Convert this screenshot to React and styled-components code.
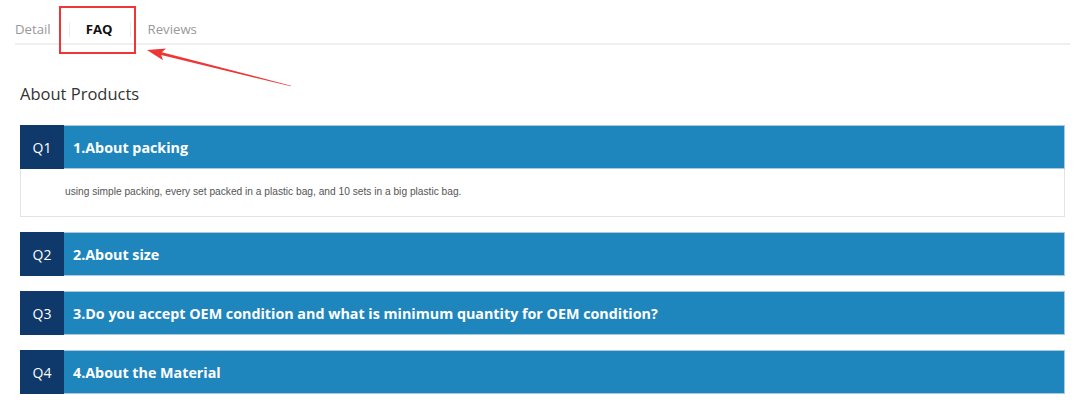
import React from "react";
import styled, { createGlobalStyle } from "styled-components";

const GlobalStyle = createGlobalStyle`
  body {
    margin: 0;
    background: #fff;
    font-family: "Open Sans", "Noto Sans", sans-serif;
  }
`;

const Page = styled.div`
  position: relative;
  width: 1080px;
  height: 414px;
  overflow: hidden;
`;

const TabBar = styled.div`
  display: flex;
  align-items: flex-start;
  height: 45px;
  padding-top: 19px;
  margin: 0 10px 0 15px;
  border-bottom: 2px solid #efefef;
  box-sizing: border-box;
`;

const Tab = styled.div`
  position: relative;
  padding: 0 ${(p) => (p.$tight ? "17px" : "18px")};
  padding-left: ${(p) => (p.$first ? "0" : p.$tight ? "17px" : "18px")};
  font-size: 13.2px;
  line-height: 20px;
  color: ${(p) => (p.$active ? "#111" : "#999")};
  font-weight: ${(p) => (p.$active ? 700 : 400)};

  ${(p) =>
    !p.$first &&
    `&::before {
      content: "";
      position: absolute;
      left: 0;
      top: 3px;
      height: 15px;
      border-left: 1px solid #ececec;
    }`}
`;

const Content = styled.div`
  padding: 0 15px 0 20px;
`;

const SectionTitle = styled.h2`
  margin: 37px 0 19px;
  font-size: 16.5px;
  line-height: 24px;
  font-weight: 400;
  color: #333;
`;

const List = styled.div`
  display: flex;
  flex-direction: column;
  gap: 15px;
`;

const Item = styled.div`
  display: flex;
  flex-direction: column;
`;

const Header = styled.div`
  display: flex;
  height: 44px;
  background: #1f86bd;
  border: 1px solid #a9c9e0;
  border-left: none;
  box-sizing: border-box;
`;

const Num = styled.div`
  width: 44px;
  flex: none;
  display: flex;
  align-items: center;
  justify-content: center;
  background: #0f386b;
  color: #fff;
  font-size: 14px;
  margin-top: -1px;
  margin-bottom: -1px;
`;

const Question = styled.div`
  display: flex;
  align-items: center;
  padding-left: 9px;
  color: #fff;
  font-size: 14.3px;
  font-weight: 700;
`;

const Answer = styled.div`
  height: 48px;
  box-sizing: border-box;
  border: 1px solid #e3e3e3;
  border-top: none;
  padding: 17px 0 0 44px;
  font-family: "Liberation Sans", Arial, sans-serif;
  font-size: 10.2px;
  color: #555;
`;

const Overlay = styled.svg`
  position: absolute;
  left: 0;
  top: 0;
  pointer-events: none;
`;

const faqs = [
  {
    n: "Q1",
    q: "1.About packing",
    a: "using simple packing, every set packed in a plastic bag, and 10 sets in a big plastic bag.",
  },
  { n: "Q2", q: "2.About size" },
  {
    n: "Q3",
    q: "3.Do you accept OEM condition and what is minimum quantity for OEM condition?",
  },
  { n: "Q4", q: "4.About the Material" },
];

export default function App() {
  return (
    <Page>
      <GlobalStyle />
      <TabBar>
        <Tab $first>Detail</Tab>
        <Tab $active $tight>FAQ</Tab>
        <Tab>Reviews</Tab>
      </TabBar>
      <Content>
        <SectionTitle>About Products</SectionTitle>
        <List>
          {faqs.map((f) => (
            <Item key={f.n}>
              <Header>
                <Num>{f.n}</Num>
                <Question>{f.q}</Question>
              </Header>
              {f.a && <Answer>{f.a}</Answer>}
            </Item>
          ))}
        </List>
      </Content>
      <Overlay width="1080" height="120" viewBox="0 0 1080 120">
        <rect x="60" y="7" width="75" height="46" fill="none" stroke="#ee3636" strokeWidth="2" />
        <polygon
          points="147,50 166,48.6 161.9,52.2 291.1,85.7 290.9,86.3 161.2,55.1 163,60.2"
          fill="#ee3636"
        />
      </Overlay>
    </Page>
  );
}
